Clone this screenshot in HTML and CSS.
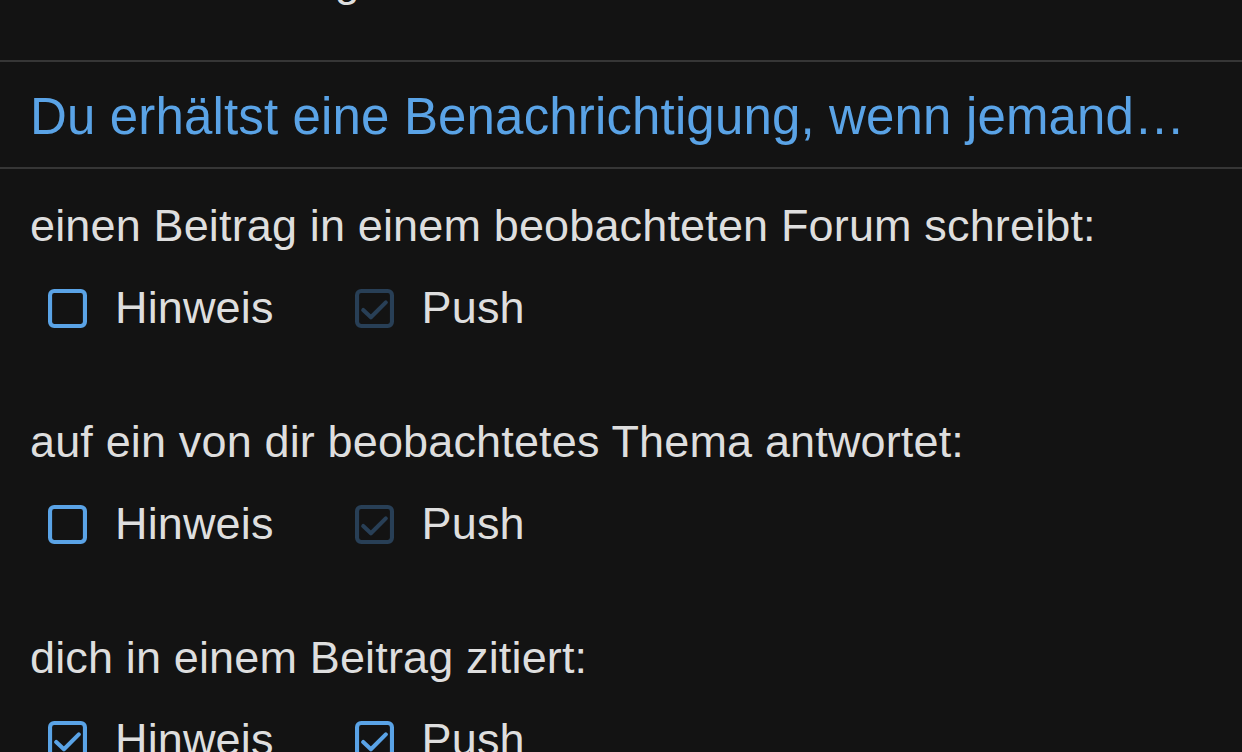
FILE: index.html
```html
<!DOCTYPE html>
<html lang="de">
<head>
<meta charset="utf-8">
<title>Benachrichtigungen</title>
<link rel="stylesheet" href="styles.css">
</head>
<body>
<div class="screen">
  <div class="top-cell">Hinweise anzeigen</div>
  <div class="section-header">Du erhältst eine Benachrichtigung, wenn jemand…</div>
  <div class="list">
    <div class="group">
      <div class="label">einen Beitrag in einem beobachteten Forum schreibt:</div>
      <div class="options">
        <div class="option">
          <svg class="box" viewBox="0 0 38 38"><rect class="frame blue" x="2" y="2" width="34" height="34" rx="4"/></svg>
          <span class="opt-label">Hinweis</span>
        </div>
        <div class="option">
          <svg class="box" viewBox="0 0 38 38"><rect class="frame dim" x="2" y="2" width="34" height="34" rx="4"/><path class="tick dim" d="M8 20.5 L15.5 27.5 L30 13"/></svg>
          <span class="opt-label">Push</span>
        </div>
      </div>
    </div>
    <div class="group">
      <div class="label">auf ein von dir beobachtetes Thema antwortet:</div>
      <div class="options">
        <div class="option">
          <svg class="box" viewBox="0 0 38 38"><rect class="frame blue" x="2" y="2" width="34" height="34" rx="4"/></svg>
          <span class="opt-label">Hinweis</span>
        </div>
        <div class="option">
          <svg class="box" viewBox="0 0 38 38"><rect class="frame dim" x="2" y="2" width="34" height="34" rx="4"/><path class="tick dim" d="M8 20.5 L15.5 27.5 L30 13"/></svg>
          <span class="opt-label">Push</span>
        </div>
      </div>
    </div>
    <div class="group">
      <div class="label">dich in einem Beitrag zitiert:</div>
      <div class="options">
        <div class="option">
          <svg class="box" viewBox="0 0 38 38"><rect class="frame blue" x="2" y="2" width="34" height="34" rx="4"/><path class="tick blue" d="M8 20.5 L15.5 27.5 L30 13"/></svg>
          <span class="opt-label">Hinweis</span>
        </div>
        <div class="option">
          <svg class="box" viewBox="0 0 38 38"><rect class="frame blue" x="2" y="2" width="34" height="34" rx="4"/><path class="tick blue" d="M8 20.5 L15.5 27.5 L30 13"/></svg>
          <span class="opt-label">Push</span>
        </div>
      </div>
    </div>
  </div>
</div>
</body>
</html>
```

FILE: styles.css
```css
html, body {
  margin: 0;
  padding: 0;
  background: #131313;
  overflow: hidden;
}

.screen {
  width: 1242px;
  height: 752px;
  overflow: hidden;
  font-family: "Liberation Sans", Helvetica, Arial, sans-serif;
  color: #dedede;
  letter-spacing: 0.15px;
}

.top-cell {
  margin-top: -46px;
  padding: 0 30px 52px;
  font-size: 45px;
  line-height: 54px;
  white-space: nowrap;
}

.section-header {
  border-top: 2px solid #363636;
  border-bottom: 2px solid #363636;
  padding: 25px 30px 21px;
  font-size: 51px;
  line-height: 59px;
  color: #5aa3e6;
  white-space: nowrap;
  overflow: hidden;
}

.list {
  padding: 30px 30px 0;
  display: flex;
  flex-direction: column;
  gap: 80px;
}

.group {
  display: flex;
  flex-direction: column;
}

.label {
  font-size: 45px;
  line-height: 54px;
  white-space: nowrap;
}

.options {
  margin-top: 28px;
  height: 54px;
  padding-left: 18px;
  display: flex;
  align-items: center;
  gap: 81px;
}

.option {
  display: flex;
  align-items: center;
  gap: 28px;
}

.box {
  width: 39px;
  height: 39px;
  flex: none;
  display: block;
}

.frame {
  fill: none;
  stroke-width: 4;
}

.tick {
  fill: none;
  stroke-width: 4;
  stroke-linecap: round;
  stroke-linejoin: round;
}

.blue { stroke: #5aa3e6; }
.dim { stroke: #283f56; }

.opt-label {
  font-size: 45px;
  line-height: 54px;
}
```
